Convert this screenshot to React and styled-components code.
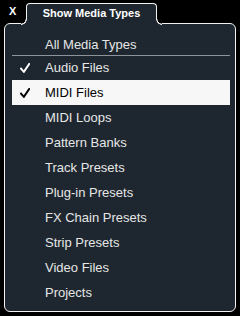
import React from 'react';
import styled, { createGlobalStyle } from 'styled-components';

const PANEL = '#1e272f';
const EDGE = '#f2f2f2';

const Global = createGlobalStyle`
    body {
        margin: 0;
        background: #000;
        font-family: "Liberation Sans", Arial, Helvetica, sans-serif;
    }
`;

const Frame = styled.div`
    width: 240px;
    height: 316px;
    background: #000;
`;

const Header = styled.div`
    display: flex;
    height: 20px;
    padding-top: 3px;
`;

const Close = styled.div`
    width: 17px;
    padding-left: 9px;
    line-height: 17px;
    font-size: 11px;
    font-weight: bold;
    color: #fff;
`;

const Tab = styled.div`
    position: relative;
    z-index: 1;
    box-sizing: border-box;
    width: 131px;
    height: 21px;
    border: 1px solid ${EDGE};
    border-bottom: none;
    border-radius: 4px 4px 0 0;
    background: ${PANEL};
    color: #fff;
    font-size: 11px;
    font-weight: bold;
    line-height: 19px;
    text-align: center;

    &::before, &::after {
        content: '';
        position: absolute;
        bottom: -1px;
        width: 6px;
        height: 6px;
    }
    &::before {
        left: -6px;
        background: radial-gradient(circle at 0 0, #000 4.3px, ${EDGE} 4.9px, ${EDGE} 5.5px, ${PANEL} 6.1px);
    }
    &::after {
        right: -6px;
        background: radial-gradient(circle at 100% 0, #000 4.3px, ${EDGE} 4.9px, ${EDGE} 5.5px, ${PANEL} 6.1px);
    }
`;

const Panel = styled.div`
    margin: 0 4px;
    border: 1px solid ${EDGE};
    border-radius: 6px;
    background: ${PANEL};
    padding: 9px 5px 6px 7px;
`;

const Row = styled.div`
    display: flex;
    align-items: center;
    height: ${p => p.$short ? 22 : 25}px;
    background: ${p => p.$active ? '#f7f7f7' : 'transparent'};
    color: ${p => p.$active ? '#000' : '#e6e6e6'};
    font-size: 13px;
`;

const Check = styled.div`
    width: 33px;
    padding-left: 8px;
    box-sizing: border-box;
    display: flex;
    align-items: center;
`;

const Divider = styled.div`
    height: 1px;
    margin-bottom: -1px;
    background: #8d939a;
`;

const Tick = ({ color }) => (
    <svg width="10" height="10" viewBox="0 0 10 10">
        <path d="M1 5.6 L3.9 8.8 L9.2 1" fill="none" stroke={color} strokeWidth="2" strokeLinecap="square" />
    </svg>
);

const items = [
    { label: 'Audio Files', checked: true },
    { label: 'MIDI Files', checked: true, active: true },
    { label: 'MIDI Loops' },
    { label: 'Pattern Banks' },
    { label: 'Track Presets' },
    { label: 'Plug-in Presets' },
    { label: 'FX Chain Presets' },
    { label: 'Strip Presets' },
    { label: 'Video Files' },
    { label: 'Projects' },
];

export default function App() {
    return (
        <Frame>
            <Global />
            <Header>
                <Close>X</Close>
                <Tab>Show Media Types</Tab>
            </Header>
            <Panel>
                <Row $short>
                    <Check />
                    All Media Types
                </Row>
                <Divider />
                {items.map(item => (
                    <Row key={item.label} $active={item.active}>
                        <Check>
                            {item.checked && <Tick color={item.active ? '#000' : '#fff'} />}
                        </Check>
                        {item.label}
                    </Row>
                ))}
            </Panel>
        </Frame>
    );
}
